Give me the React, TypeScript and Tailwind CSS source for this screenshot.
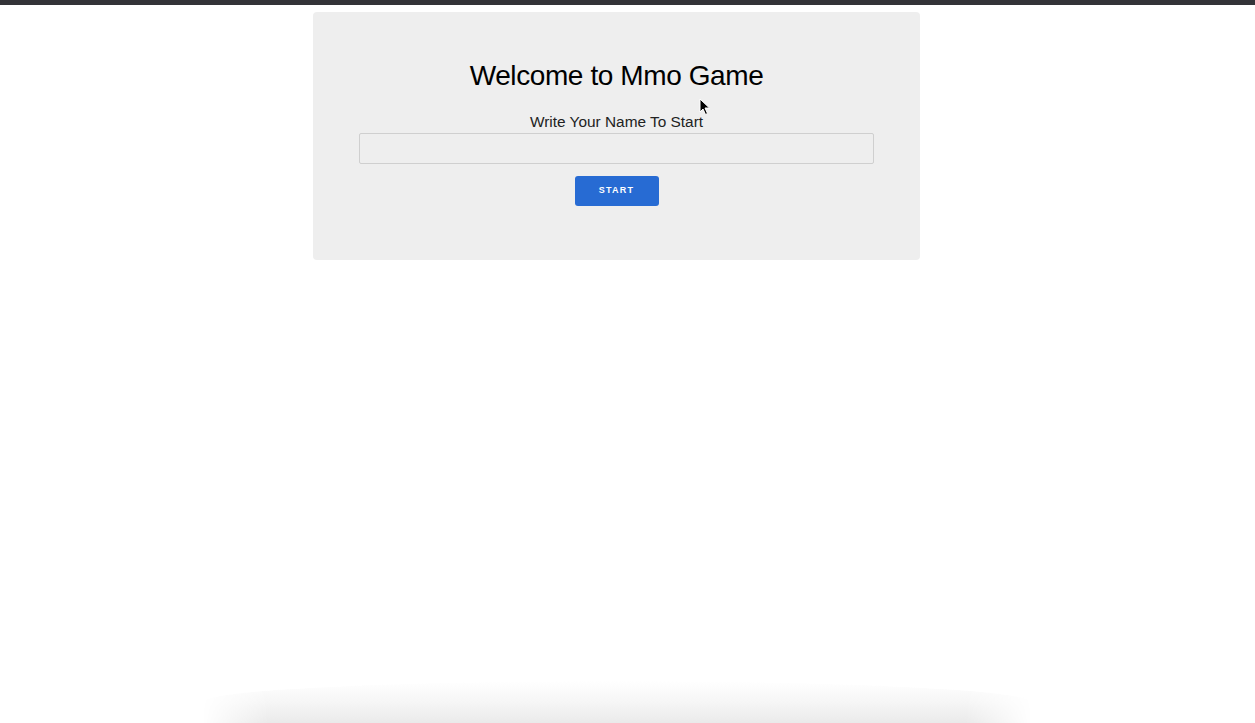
import React, { useState } from "react";

const Cursor = () => (
  <svg width="12" height="18" viewBox="0 0 12 18" className="absolute left-[386px] top-[86px]">
    <path d="M1 1 L1 14 L4 11 L6.5 16.5 L8.5 15.5 L6 10 L10.5 10 Z" fill="#000" stroke="#fff" strokeWidth="1" />
  </svg>
);

export default function App() {
  const [name, setName] = useState("");

  return (
    <div className="min-h-screen flex flex-col bg-white font-['Liberation_Sans',Arial,sans-serif]">
      {/* top bar */}
      <div className="h-[5px] bg-[#333338]" />

      <div className="w-[1233px] flex-1 flex flex-col">
        {/* login card */}
        <div className="relative mx-auto mt-[7px] w-[607px] h-[248px] bg-[#eeeeee] rounded-[4px] px-[46px] pt-[47px] flex flex-col items-center">
          <h1 className="text-[28px] leading-[34px] tracking-[-0.4px] text-black font-normal">
            Welcome to Mmo Game
          </h1>
          <p className="mt-[20px] text-[15.4px] leading-[18px] text-[#222]">
            Write Your Name To Start
          </p>
          <input
            value={name}
            onChange={(e) => setName(e.target.value)}
            className="mt-[2px] w-full h-[31px] border border-[#cfcfcf] rounded-[2px] bg-[#eeeeee] px-2 text-sm outline-none"
          />
          <button className="mt-[12px] w-[84px] h-[30px] rounded-[3px] bg-[#276bd3] text-white text-[9px] font-bold tracking-[1.2px]">
            START
          </button>
          <Cursor />
        </div>

        <div className="flex-1" />

        {/* bottom glow */}
        <div className="mx-auto w-[830px] h-[42px] rounded-t-[50%] bg-gradient-to-t from-[#eaeaea] via-[#f6f6f6] to-white [mask-image:linear-gradient(to_right,transparent,black_8%,black_92%,transparent)]" />
      </div>
    </div>
  );
}
